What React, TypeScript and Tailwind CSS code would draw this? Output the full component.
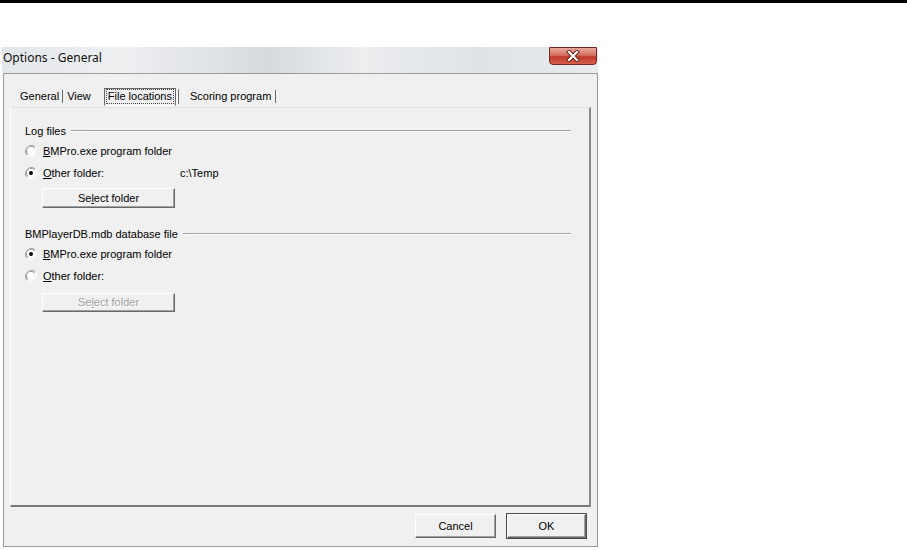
import React from 'react';

const ui = { fontFamily: '"Liberation Sans", Arial, sans-serif' };

const Acc = ({ text, at }: { text: string; at: number }) => (
  <>
    {text.slice(0, at)}
    <span className="underline underline-offset-[1px]">{text[at]}</span>
    {text.slice(at + 1)}
  </>
);

const Radio = ({ checked }: { checked?: boolean }) => (
  <svg width="12" height="12" viewBox="0 0 12 12" className="shrink-0">
    <path d="M10.2 1.8A6 6 0 0 0 1.8 10.2" fill="none" stroke="#a0a0a0" strokeWidth="1" />
    <path d="M9.3 2.7A4.7 4.7 0 0 0 2.7 9.3" fill="none" stroke="#696969" strokeWidth="1" />
    <path d="M1.8 10.2A6 6 0 0 0 10.2 1.8" fill="none" stroke="#ffffff" strokeWidth="1" />
    <circle cx="6" cy="6" r="4.2" fill="#ffffff" />
    {checked && <circle cx="6" cy="6" r="2" fill="#000" />}
  </svg>
);

const RadioRow = ({ label, at, checked, value, className }: { label: string; at: number; checked?: boolean; value?: string; className: string }) => (
  <div className={`flex items-center h-[14px] pl-[14px] ${className}`}>
    <Radio checked={checked} />
    <span className="ml-[6px] w-[137px] text-[11px] leading-none">
      <Acc text={label} at={at} />
    </span>
    {value && <span className="text-[11px] leading-none">{value}</span>}
  </div>
);

const GroupHead = ({ title, className }: { title: string; className: string }) => (
  <div className={`flex items-center h-[14px] pl-[14px] pr-[18px] ${className}`}>
    <span className="text-[11px] leading-none">{title}</span>
    <div className="flex-1 ml-[5px] h-[2px] border-t border-[#a0a0a0] border-b border-b-white" />
  </div>
);

const Btn = ({ children, disabled, def, className }: { children: React.ReactNode; disabled?: boolean; def?: boolean; className: string }) => (
  <div
    className={`flex items-center justify-center bg-[#f0f0f0] text-[11px] leading-none border-t border-l border-white border-r border-b border-r-[#696969] border-b-[#696969] shadow-[inset_-1px_-1px_0_#a0a0a0] ${def ? 'outline outline-1 outline-[#4a4a4a]' : ''} ${disabled ? 'text-[#a0a0a0] [text-shadow:1px_1px_0_#fff]' : 'text-black'} ${className}`}
  >
    {children}
  </div>
);

export default function App() {
  return (
    <div className="w-[907px] h-[550px] bg-white overflow-hidden text-black" style={ui}>
      <div className="h-[3px] bg-black" />
      <div className="ml-[2px] mt-[44px] w-[596px] h-[501px] flex flex-col">
        {/* title bar */}
        <div className="h-[26px] flex items-start bg-[linear-gradient(90deg,#e4e7ea_0%,#eef0f2_20%,#d6dadf_45%,#eceef0_60%,#dfe3e7_80%,#e9ebee_100%)]">
          <span className="mt-[4px] ml-[1px] text-[12px] leading-[14px] text-[#111]" style={{ fontFamily: '"Noto Sans", "Open Sans", sans-serif' }}>
            Options - General
          </span>
          <div className="ml-auto mr-[1px] w-[48px] h-[18px] rounded-b-[4px] border border-[#6e2a20] bg-[linear-gradient(180deg,#e8a89c_0%,#d4705f_45%,#c0392b_55%,#d8604c_100%)] flex items-center justify-center">
            <svg width="14" height="12" viewBox="0 0 14 12">
              <path d="M3 2L11 10M11 2L3 10" stroke="#5a1d14" strokeWidth="4" strokeLinecap="square" />
              <path d="M3 2L11 10M11 2L3 10" stroke="#ffffff" strokeWidth="2.2" strokeLinecap="square" />
            </svg>
          </div>
        </div>
        {/* client area */}
        <div className="ml-[1px] flex-1 flex flex-col bg-[#f0f0f0] border border-[#9a9a9a] mb-[1px]">
          {/* tabs */}
          <div className="mt-[13px] ml-[12px] h-[19px] flex items-center text-[11px] leading-none">
            <span className="pl-[4px] pr-[3px]">General</span>
            <span className="w-[1px] h-[13px] bg-[#696969]" />
            <span className="px-[4px]">View</span>
            <div className="ml-[9px] h-[18px] px-[2px] flex items-center border-t border-l border-[#696969] border-r border-b border-r-[#696969] border-b-white">
              <span className="px-[1px] py-[1px] outline outline-1 outline-dotted outline-[#444]">File locations</span>
            </div>
            <span className="w-[1px] h-[15px] bg-white ml-[1px]" />
            <span className="w-[1px] h-[15px] bg-[#696969]" />
            <span className="pl-[11px] pr-[4px]">Scoring program</span>
            <span className="w-[1px] h-[13px] bg-[#696969]" />
          </div>
          {/* panel */}
          <div className="ml-[6px] mr-[6px] mt-[1px] h-[400px] flex flex-col border-t border-l border-t-[#e3e3e3] border-l-white border-r-2 border-b-2 border-r-[#8a8a8a] border-b-[#7a7a7a]">
            <GroupHead title="Log files" className="mt-[16px]" />
            <RadioRow label="BMPro.exe program folder" at={0} className="mt-[6px]" />
            <RadioRow label="Other folder:" at={0} checked value="c:\Temp" className="mt-[8px]" />
            <Btn className="mt-[8px] ml-[31px] w-[133px] h-[20px]">
              <Acc text="Select folder" at={2} />
            </Btn>
            <GroupHead title="BMPlayerDB.mdb database file" className="mt-[19px]" />
            <RadioRow label="BMPro.exe program folder" at={0} checked className="mt-[6px]" />
            <RadioRow label="Other folder:" at={0} className="mt-[8px]" />
            <Btn disabled className="mt-[10px] ml-[31px] w-[133px] h-[19px]">
              <Acc text="Select folder" at={2} />
            </Btn>
          </div>
          {/* dialog buttons */}
          <div className="mt-[7px] flex justify-end gap-[11px] pr-[11px]">
            <Btn className="w-[81px] h-[24px]">Cancel</Btn>
            <Btn def className="w-[79px] h-[24px]">OK</Btn>
          </div>
        </div>
      </div>
    </div>
  );
}
